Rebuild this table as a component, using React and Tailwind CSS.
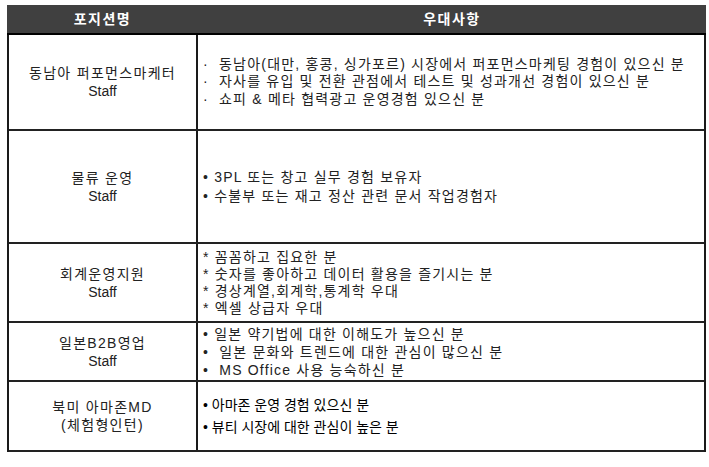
const rows = [
  {
    h: "h-[96px]",
    title: ["동남아 퍼포먼스마케터", "Staff"],
    items: [
      "·  동남아(대만, 홍콩, 싱가포르) 시장에서 퍼포먼스마케팅 경험이 있으신 분",
      "·  자사를 유입 및 전환 관점에서 테스트 및 성과개선 경험이 있으신 분",
      "·  쇼피 & 메타 협력광고 운영경험 있으신 분",
    ],
    lead: "leading-[17.5px]",
  },
  {
    h: "h-[113px]",
    title: ["물류 운영", "Staff"],
    items: ["• 3PL 또는 창고 실무 경험 보유자", "• 수불부 또는 재고 정산 관련 문서 작업경험자"],
    lead: "leading-[19px]",
  },
  {
    h: "h-[79px]",
    title: ["회계운영지원", "Staff"],
    items: [
      "* 꼼꼼하고 집요한 분",
      "* 숫자를 좋아하고 데이터 활용을 즐기시는 분",
      "* 경상계열,회계학,통계학 우대",
      "* 엑셀 상급자 우대",
    ],
    lead: "leading-[17px]",
  },
  {
    h: "h-[59px]",
    title: ["일본B2B영업", "Staff"],
    items: [
      "• 일본 약기법에 대한 이해도가 높으신 분",
      "•  일본 문화와 트렌드에 대한 관심이 많으신 분",
      "•  MS Office 사용 능숙하신 분",
    ],
    lead: "leading-[18px]",
  },
];

export default function App() {
  return (
    <div
      className="w-[709px] h-[467px] bg-white pt-[5px] pl-[7px] text-[#222]"
      style={{ fontFamily: '"Liberation Sans", "Noto Sans CJK KR", sans-serif' }}
    >
      <div className="w-[699px]">
        <div className="flex h-[30px] bg-[#404040] border-b-2 border-black text-white font-bold text-[14px]">
          <div className="w-[191px] flex items-center justify-center tracking-[1.5px]">포지션명</div>
          <div className="flex-1 flex items-center justify-center tracking-[1.5px]">우대사항</div>
        </div>
        <div className="border-l-2 border-r-2 border-[#1a1a1a]">
          {rows.map((r, i) => (
            <div key={i} className={`flex ${r.h} border-b-2 border-[#222]`}>
              <div className="w-[189px] shrink-0 border-r-2 border-[#1a1a1a] flex flex-col items-center justify-center text-[14px] leading-[18px] tracking-[1.3px]">
                <div>{r.title[0]}</div>
                <div className="tracking-normal">{r.title[1]}</div>
              </div>
              <div className={`flex-1 flex flex-col justify-center pl-[5px] text-[14px] ${r.lead} tracking-[1.2px] whitespace-pre`}>
                {r.items.map((t, j) => (
                  <div key={j}>{t}</div>
                ))}
              </div>
            </div>
          ))}
          <div className="flex h-[70px] border-b-2 border-[#222]">
            <div className="w-[189px] shrink-0 border-r-2 border-[#1a1a1a] flex flex-col items-center justify-center text-[14px] leading-[18px] tracking-[1.3px]">
              <div>북미 아마존MD</div>
              <div>(체험형인턴)</div>
            </div>
            <div className="flex-1 flex flex-col justify-center pl-[5px] text-[14px] leading-[22px] text-black">
              <div>• 아마존 운영 경험 있으신 분</div>
              <div>• 뷰티 시장에 대한 관심이 높은 분</div>
            </div>
          </div>
        </div>
      </div>
    </div>
  );
}
